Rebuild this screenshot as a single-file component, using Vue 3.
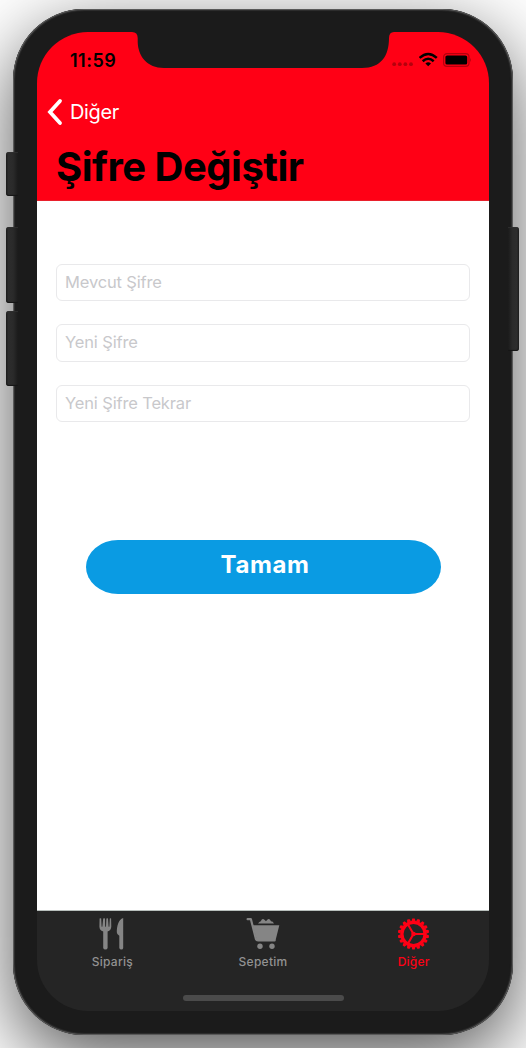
<script setup>
const fields = ['Mevcut Şifre', 'Yeni Şifre', 'Yeni Şifre Tekrar']
const teeth = Array.from({ length: 18 }, (_, i) => i * 20)
</script>

<template>
  <main class="stage">
    <i class="key mute"></i>
    <i class="key up"></i>
    <i class="key down"></i>
    <i class="key power"></i>
    <div class="phone">
      <div class="screen">
        <header class="top">
          <div class="status">
            <span class="time">11:59</span>
            <svg class="indicators" width="80" height="16" viewBox="0 0 80 16">
              <g fill="#b5000d">
                <circle cx="3.2" cy="12.2" r="1.9" /><circle cx="8.8" cy="12.2" r="1.9" />
                <circle cx="14.4" cy="12.2" r="1.9" /><circle cx="20" cy="12.2" r="1.9" />
              </g>
              <g fill="none" stroke="#000" stroke-width="2.5">
                <path d="M28.6 5.9Q37.2-1.9 45.8 5.9" />
                <path d="M31.7 9.2Q37.2 4.3 42.7 9.2" />
              </g>
              <path d="M34.4 11.5Q37.2 9.2 40 11.5L37.2 14.2Z" />
              <rect x="52.6" y="1.6" width="25.4" height="12.8" rx="3.4" fill="none" stroke="#b5000d" stroke-width="1.2" />
              <rect x="54.4" y="3.4" width="21.8" height="9.2" rx="1.7" />
              <path d="M79 6q1.6 2 0 4z" fill="#b5000d" />
            </svg>
          </div>
          <nav class="back">
            <svg width="16" height="28" viewBox="0 0 16 28">
              <path d="M13 3L3 14L13 25" fill="none" stroke="#fff" stroke-width="3.8" stroke-linecap="round" stroke-linejoin="miter" />
            </svg>
            <span>Diğer</span>
          </nav>
          <h1>Şifre Değiştir</h1>
        </header>

        <section class="form">
          <input v-for="f in fields" :key="f" :placeholder="f" type="text" />
          <button>Tamam</button>
        </section>

        <footer class="tabs">
          <div class="row">
            <div class="tab">
              <svg width="34" height="34" viewBox="0 0 34 34" fill="#858585">
                <path d="M4.6 1.6Q5.4.8 6.2 1.6L6.6 9.4Q7 10.2 7.4 9.4L8.2 1.6Q9.1.7 10 1.6L10.2 9.4Q10.6 10.2 11 9.4L11.4 1.6Q12.2.7 13 1.6L13.6 9.4Q14 10.2 14.4 9.4L14.8 1.6Q15.5.8 16.1 1.6L16.3 9.5Q16.2 13.4 12.6 14.6V31Q12.2 32.6 10.4 32.6Q8.6 32.6 8.2 31V14.6Q4.4 13.3 4.4 9.5Z" />
                <path d="M28.2 1V31Q28 32.6 26.4 32.6Q24.7 32.6 24.3 31V18.8Q21.8 17.6 21.8 15.3C21.8 9.5 23.4 2.2 28.2 1Z" />
              </svg>
              <span>Sipariş</span>
            </div>
            <div class="tab">
              <svg width="34" height="34" viewBox="0 0 34 34" fill="#858585">
                <path d="M1.6 2.2H4.9L10 22.2Q10.4 23.4 12 23.4H28.6" fill="none" stroke="#858585" stroke-width="2.2" stroke-linecap="round" stroke-linejoin="round" />
                <path d="M6.8 8.2H33.3L29.7 22.8Q29.4 23.8 28.4 23.8H11Z" />
                <path d="M12 6.4Q13.3 4.4 14.8 4.2Q16.3.9 18.4 2.8L20 4.2L21.3 2.7Q23.3.9 25 4.2Q27 4.3 28 6.4Z" />
                <circle cx="14" cy="29.3" r="2.7" /><circle cx="26" cy="29.3" r="2.7" />
              </svg>
              <span>Sepetim</span>
            </div>
            <div class="tab on">
              <svg width="34" height="34" viewBox="0 0 34 34">
                <g transform="translate(16.5 17)">
                  <path v-for="a in teeth" :key="a" d="M-2-12.8L-1.2-15.6H1.2L2-12.8Z" fill="#ff0015" :transform="`rotate(${a})`" />
                  <circle r="11.6" fill="none" stroke="#ff0015" stroke-width="3.3" />
                  <path d="M11 0H0L-5.5-9.5M0 0L-5.5 9.5" fill="none" stroke="#ff0015" stroke-width="2.1" />
                  <circle r="2.3" fill="#ff0015" />
                </g>
              </svg>
              <span>Diğer</span>
            </div>
          </div>
          <div class="home"></div>
        </footer>
      </div>
      <svg class="notch" width="266" height="37" viewBox="0 0 266 37">
        <path d="M0 0H266V1H264Q259 1 259 7C259 25 251 37 232 37H34C17 37 8 25 7.7 11V7Q7.7 1 2 1H0Z" fill="#1b1b1b" />
      </svg>
    </div>
  </main>
</template>

<style>
body { margin: 0; background: #fff; }
</style>

<style scoped>
* { box-sizing: border-box; }
.stage {
  position: relative;
  width: 526px;
  height: 1048px;
  padding: 9px 13px 0;
  overflow: hidden;
  background: #fff;
  font-family: Inter, "Liberation Sans", sans-serif;
}
.phone {
  position: relative;
  width: 500px;
  height: 1026px;
  padding: 23px 24px 24px;
  border-radius: 71px;
  background: #1b1b1b;
  box-shadow: inset 0 0 0 1px #5a5a5a, inset 0 0 1px 2px #303030, 0 24px 76px rgba(0, 0, 0, .67);
}
.key {
  position: absolute;
  z-index: 1;
  left: 6px;
  width: 12px;
  border-radius: 3px 0 0 3px;
  background: linear-gradient(90deg, #1d1d1d, #2d2d2d 20%, #2a2a2a 60%, #1b1b1b);
  box-shadow: inset 0 1px 1px #2f2f2f, inset 0 -1px 1px #141414;
}
.mute { top: 152px; height: 44px; }
.up { top: 227px; height: 76px; }
.down { top: 311px; height: 75px; }
.power { top: 227px; height: 124px; left: 508px; width: 11px; transform: scaleX(-1); }
.screen {
  display: flex;
  flex-direction: column;
  width: 452px;
  height: 979px;
  border-radius: 51px;
  overflow: hidden;
}
.notch { position: absolute; left: 117px; top: 22px; }
.top {
  flex: none;
  height: 169px;
  background: #ff0015;
  border-bottom: 1px solid #e9202c;
}
.status {
  display: flex;
  justify-content: space-between;
  padding: 17px 18px 0 33px;
  height: 63px;
}
.time { font-size: 18px; font-weight: 600; line-height: 23px; letter-spacing: .5px; }
.indicators { margin-top: 3px; }
.back {
  display: flex;
  align-items: center;
  gap: 7px;
  padding-left: 10px;
  height: 34px;
  color: #fff;
  font-size: 20px;
  letter-spacing: -.35px;
}
h1 {
  margin: 14px 0 0 19px;
  font-size: 40px;
  line-height: 48px;
  font-weight: 700;
  letter-spacing: -.5px;
  color: #000;
  white-space: nowrap;
}
.form {
  flex: 1;
  display: flex;
  flex-direction: column;
  padding: 63px 19px 0;
  gap: 23px;
  background: #fff;
}
input {
  height: 37.3px;
  padding: 0 8px 1px;
  border: 1px solid #e9e9eb;
  border-radius: 6px;
  background: #fff;
  font: 400 16.5px Inter, sans-serif;
  letter-spacing: -.15px;
  outline: none;
}
input::placeholder { color: #c8c8cb; opacity: 1; }
button {
  margin: 95px 29px 0 30px;
  height: 54px;
  padding: 0 0 5px 3px;
  border: 0;
  border-radius: 32px / 27px;
  background: #0a9be3;
  color: #fff;
  font: 700 24px Inter, sans-serif;
  letter-spacing: .6px;
}
.tabs {
  flex: none;
  height: 101px;
  background: #252525;
  border-top: 1px solid #b8bfbc;
}
.row { display: flex; height: 84px; }
.tab {
  flex: 1;
  display: flex;
  flex-direction: column;
  align-items: center;
  padding-top: 6px;
  color: #929292;
  font-size: 12px;
  line-height: 16px;
  font-weight: 500;
  letter-spacing: .25px;
}
.tab span { margin-top: 3px; }
.on { color: #ff0015; }
.home { width: 161px; height: 6px; margin: 0 auto; border-radius: 3px; background: #4b4b4b; }
</style>
